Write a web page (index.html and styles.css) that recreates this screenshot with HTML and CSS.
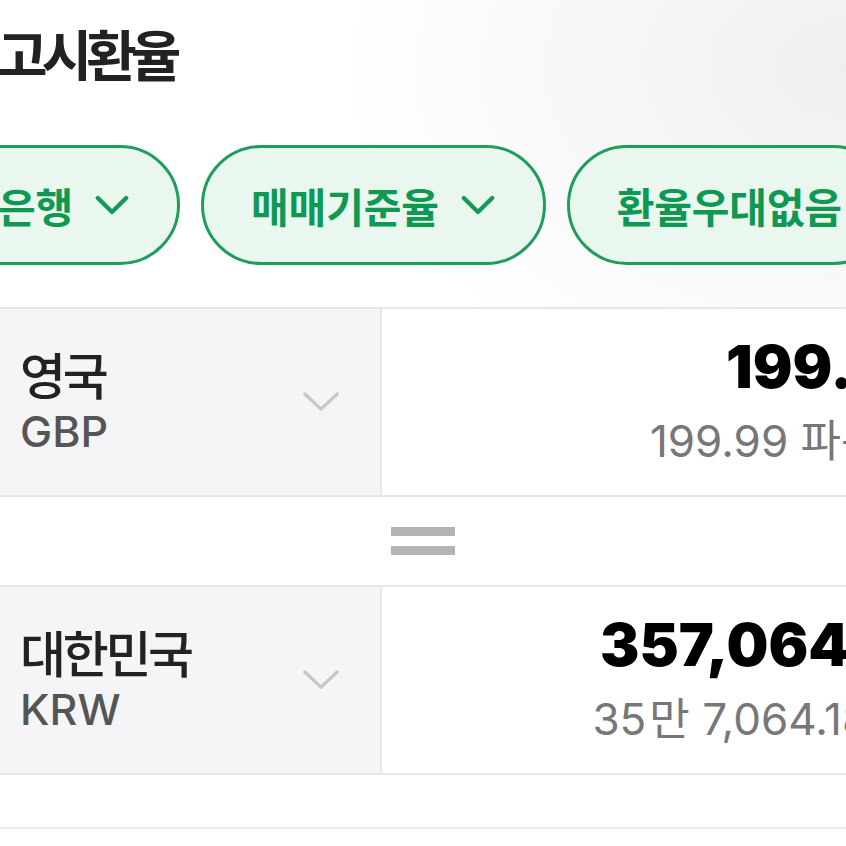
FILE: index.html
```html
<!DOCTYPE html>
<html lang="ko">

<head>
  <meta charset="UTF-8">
  <meta name="viewport" content="width=device-width, initial-scale=1.0">
  <title>고시환율</title>
  <link rel="stylesheet" href="styles.css">
</head>

<body>
  <div class="widget">
    <h2 class="title">고시환율</h2>

    <!-- 필터 칩 -->
    <div class="chips">
      <button class="chip">하나은행
        <svg class="chip-arrow" viewBox="0 0 36 22"><polyline points="3,3 18,18 33,3" /></svg>
      </button>
      <button class="chip">매매기준율
        <svg class="chip-arrow" viewBox="0 0 36 22"><polyline points="3,3 18,18 33,3" /></svg>
      </button>
      <button class="chip">환율우대없음</button>
    </div>

    <!-- 변환 -->
    <div class="rate-row">
      <div class="country">
        <div class="country-name">
          <strong>영국</strong>
          <span>GBP</span>
        </div>
        <svg class="select-arrow" viewBox="0 0 40 24"><polyline points="3,3 20,19 37,3" /></svg>
      </div>
      <div class="amount">
        <strong>199.99</strong>
        <span>199.99 파운드</span>
      </div>
    </div>

    <div class="equal">
      <i></i>
      <i></i>
    </div>

    <div class="rate-row">
      <div class="country">
        <div class="country-name">
          <strong>대한민국</strong>
          <span>KRW</span>
        </div>
        <svg class="select-arrow" viewBox="0 0 40 24"><polyline points="3,3 20,19 37,3" /></svg>
      </div>
      <div class="amount">
        <strong>357,064.18</strong>
        <span>35<em>만</em> 7,064.18 원</span>
      </div>
    </div>

    <div class="bottom-line"></div>
  </div>
</body>

</html>
```

FILE: styles.css
```css
* {
  padding: 0;
  margin: 0;
  box-sizing: border-box;
}

html,
body {
  height: 100%;
  overflow: hidden;
}

body {
  font-family: Inter, "Noto Sans CJK KR", sans-serif;
  color: #222;
  background: radial-gradient(ellipse 520px 360px at 100% 8%, #efefef, #fff 100%);
}

.widget {
  width: 960px;
}

.title {
  height: 104px;
  line-height: 104px;
  margin-left: -3px;
  font-family: "Noto Sans CJK KR", sans-serif;
  font-size: 55px;
  font-weight: 700;
  letter-spacing: -6px;
  color: #222;
}

.chips {
  display: flex;
  gap: 21px;
  margin: 41px 0 0 -127px;
  white-space: nowrap;
}

.chip {
  display: flex;
  align-items: center;
  gap: 22px;
  flex-shrink: 0;
  height: 120px;
  padding: 0 48px 0 47px;
  border: 3px solid #1f9e5b;
  border-radius: 60px;
  background: #eaf7ef;
  font-family: "Noto Sans CJK KR", sans-serif;
  font-size: 41px;
  font-weight: 700;
  letter-spacing: -0.2px;
  color: #0f9852;
}

.chip-arrow {
  width: 34px;
  height: 21px;
  fill: none;
  stroke: #139a56;
  stroke-width: 4.5;
  stroke-linecap: round;
  stroke-linejoin: round;
}

.rate-row {
  display: flex;
  height: 190px;
  margin-top: 42px;
  border-top: 2px solid #e7e7e9;
  border-bottom: 2px solid #e7e7e9;
}

.country {
  display: flex;
  align-items: center;
  justify-content: space-between;
  width: 382px;
  padding: 0 40px 0 20px;
  background: #f5f5f7;
  border-right: 2px solid #e7e7e9;
}

.country-name {
  display: flex;
  flex-direction: column;
  gap: 8px;
}

.country-name strong {
  font-family: "Noto Sans CJK KR", sans-serif;
  font-size: 50px;
  line-height: 50px;
  font-weight: 500;
  letter-spacing: -3.3px;
  color: #222;
}

.country-name span {
  font-size: 43px;
  line-height: 50px;
  font-weight: 500;
  color: #555;
}

.select-arrow {
  width: 38px;
  height: 23px;
  fill: none;
  stroke: #c8c8ca;
  stroke-width: 3.5;
  stroke-linecap: round;
  stroke-linejoin: round;
}

.amount {
  flex: 1;
  display: flex;
  flex-direction: column;
  align-items: flex-end;
  gap: 19px;
  padding: 28px 38px 0 0;
  background: #fff;
}

.amount strong {
  margin-right: -9px;
  font-size: 59px;
  line-height: 60px;
  font-weight: 900;
  color: #000;
}

.amount span {
  font-size: 44px;
  line-height: 50px;
  font-weight: 400;
  color: #777;
}

.amount em {
  font-style: normal;
  margin-left: 3px;
}

.equal {
  display: flex;
  flex-direction: column;
  gap: 10px;
  width: 64px;
  margin: 30px 0 0 391px;
}

.equal i {
  display: block;
  height: 9px;
  background: #b4b4b4;
}

.equal + .rate-row {
  margin-top: 30px;
}

.bottom-line {
  height: 2px;
  margin-top: 52px;
  background: #ececee;
}
```
